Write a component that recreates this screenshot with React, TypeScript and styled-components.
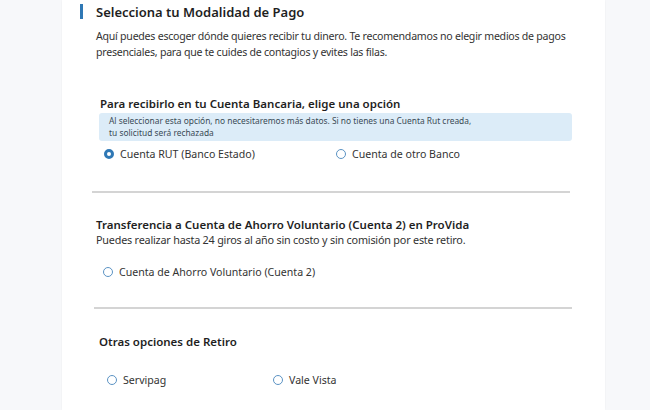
import React from "react";
import styled, { createGlobalStyle } from "styled-components";

const Global = createGlobalStyle`
  html, body { margin: 0; padding: 0; background: #f7f8fa; }
  body { font-family: "Noto Sans", "Open Sans", sans-serif; color: #2b2b2b; }
`;

const Page = styled.div`
  display: flex;
  justify-content: flex-start;
  padding-left: 62px;
  height: 410px;
  overflow: hidden;
`;

const Card = styled.div`
  width: 543px;
  background: #ffffff;
  box-shadow: 0 0 2px rgba(0, 0, 0, 0.05);
  padding: 3px 0 0 18px;
  box-sizing: border-box;
  display: flex;
  flex-direction: column;
`;

const TitleRow = styled.div`
  display: flex;
  align-items: center;
  gap: 13px;
  height: 17px;
`;

const Bar = styled.span`
  width: 3px;
  height: 15px;
  background: #2f78b5;
`;

const Title = styled.h2`
  margin: 0;
  font-size: 13px;
  font-weight: 600;
  color: #1f1f1f;
`;

const Intro = styled.p`
  margin: 8px 0 0 16px;
  font-size: 10.6px;
  letter-spacing: -0.25px;
  line-height: 16px;
  color: #333;
  width: 485px;
`;

const Section = styled.div<{ $indent: number; $top: number }>`
  margin-top: ${(p) => p.$top}px;
  padding-left: ${(p) => p.$indent}px;
  display: flex;
  flex-direction: column;
`;

const SectionTitle = styled.h3`
  margin: 0;
  font-size: 11.5px;
  font-weight: 600;
  line-height: 16px;
  color: #1f1f1f;
`;

const SubText = styled.p`
  margin: -1px 0 0;
  font-size: 10.8px;
  letter-spacing: -0.2px;
  line-height: 16px;
  color: #333;
`;

const Info = styled.div`
  margin-top: 1px;
  margin-left: -1px;
  width: 473px;
  box-sizing: border-box;
  background: #dcecf8;
  border-radius: 3px;
  padding: 2px 10px 2px;
  font-size: 8.4px;
  line-height: 12px;
  color: #3a4a55;
`;

const Options = styled.div<{ $top: number; $cols: number; $shift: number }>`
  margin-top: ${(p) => p.$top}px;
  padding-left: ${(p) => p.$shift}px;
  display: grid;
  grid-template-columns: ${(p) => p.$cols}px auto;
`;

const Option = styled.label`
  display: flex;
  align-items: center;
  gap: 6px;
  font-size: 10.6px;
  color: #333;
  line-height: 16px;
`;

const Radio = styled.span<{ $on?: boolean }>`
  width: 10px;
  height: 10px;
  border-radius: 50%;
  box-sizing: border-box;
  border: ${(p) => (p.$on ? "3px solid #2f78b5" : "1px solid #5b93c4")};
  background: #fff;
  flex: none;
`;

const Divider = styled.hr<{ $top: number; $left: number }>`
  margin: ${(p) => p.$top}px 0 0 ${(p) => p.$left}px;
  width: 478px;
  border: none;
  height: 2px;
  background: #d4d4d4;
`;

export default function App() {
  return (
    <>
      <Global />
      <Page>
        <Card>
          <TitleRow>
            <Bar />
            <Title>Selecciona tu Modalidad de Pago</Title>
          </TitleRow>
          <Intro>
            Aquí puedes escoger dónde quieres recibir tu dinero. Te recomendamos no elegir medios de pagos presenciales, para que te cuides de contagios y evites las filas.
          </Intro>

          <Section $indent={20} $top={36}>
            <SectionTitle>Para recibirlo en tu Cuenta Bancaria, elige una opción</SectionTitle>
            <Info>
              Al seleccionar esta opción, no necesitaremos más datos. Si no tienes una Cuenta Rut creada,
              <br />
              tu solicitud será rechazada
            </Info>
            <Options $top={5} $cols={232} $shift={4}>
              <Option>
                <Radio $on />
                Cuenta RUT (Banco Estado)
              </Option>
              <Option>
                <Radio />
                Cuenta de otro Banco
              </Option>
            </Options>
          </Section>

          <Divider $top={29} $left={12} />

          <Section $indent={16} $top={24}>
            <SectionTitle>Transferencia a Cuenta de Ahorro Voluntario (Cuenta 2) en ProVida</SectionTitle>
            <SubText>Puedes realizar hasta 24 giros al año sin costo y sin comisión por este retiro.</SubText>
            <Options $top={16} $cols={235} $shift={7}>
              <Option>
                <Radio />
                Cuenta de Ahorro Voluntario (Cuenta 2)
              </Option>
            </Options>
          </Section>

          <Divider $top={27} $left={14} />

          <Section $indent={19} $top={25}>
            <SectionTitle>Otras opciones de Retiro</SectionTitle>
            <Options $top={22} $cols={166} $shift={8}>
              <Option>
                <Radio />
                Servipag
              </Option>
              <Option>
                <Radio />
                Vale Vista
              </Option>
            </Options>
          </Section>
        </Card>
      </Page>
    </>
  );
}
